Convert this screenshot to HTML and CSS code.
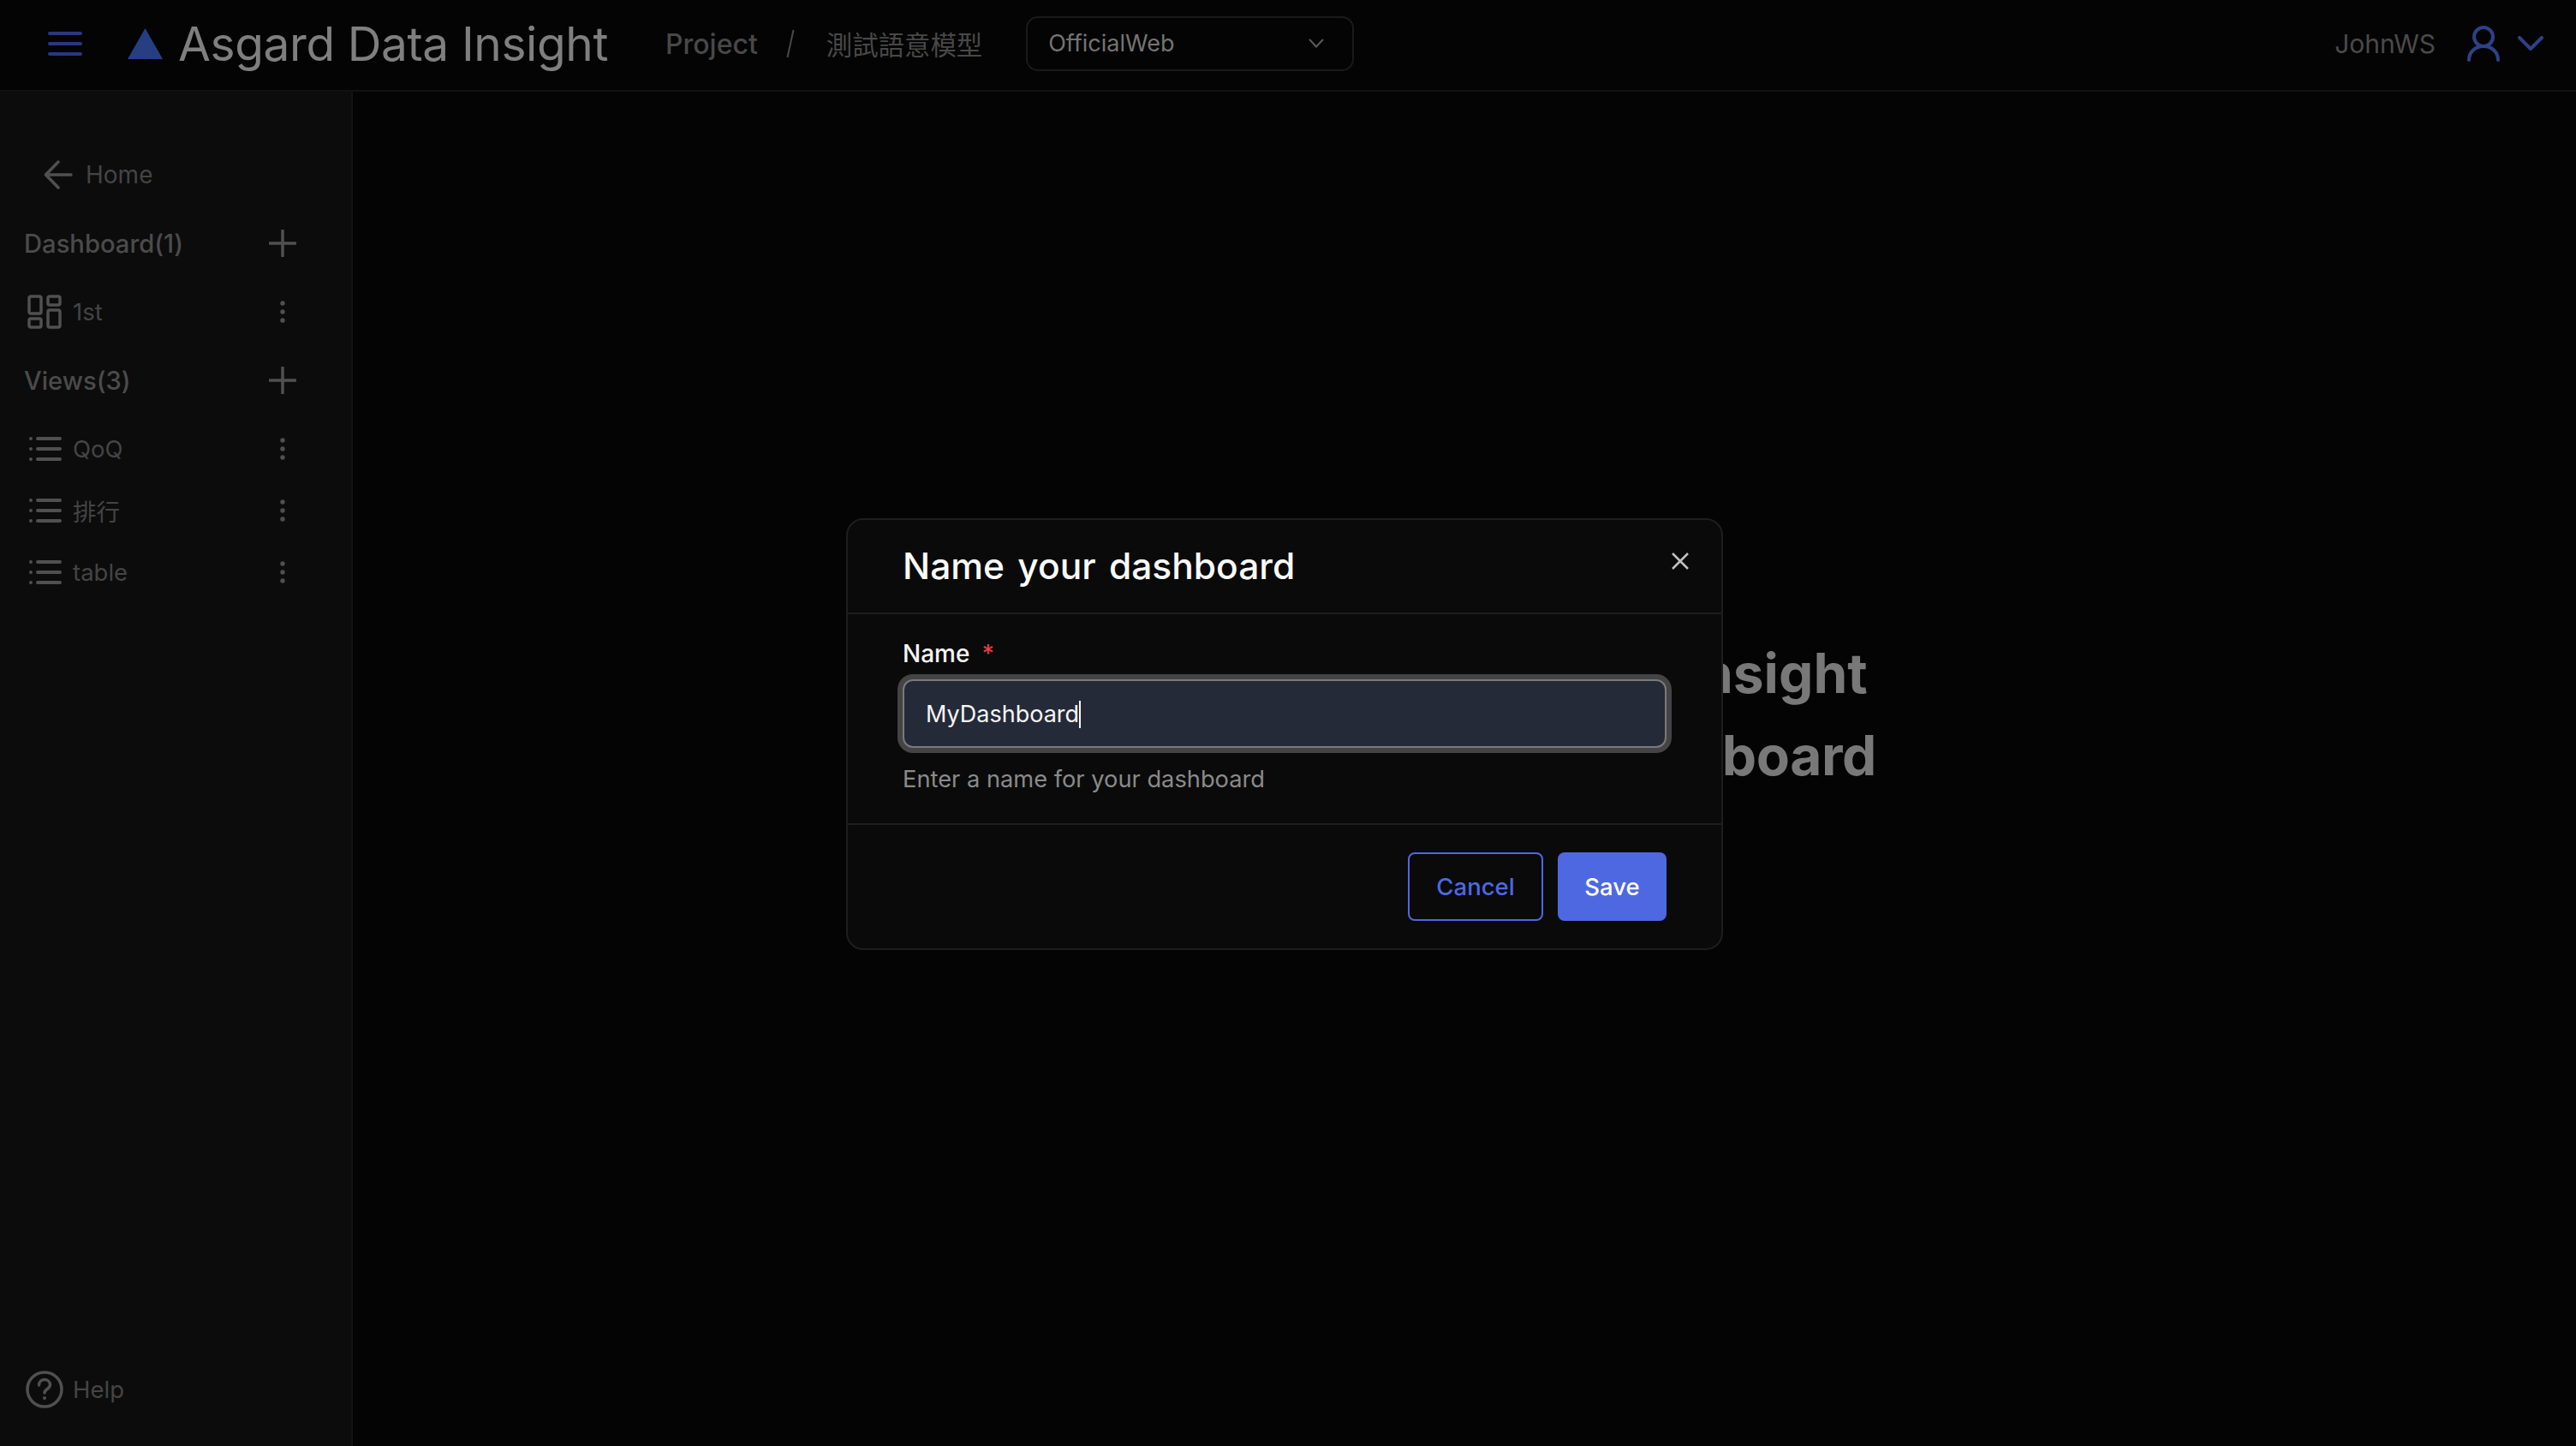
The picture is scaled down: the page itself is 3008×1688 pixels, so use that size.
FILE: index.html
```html
<!DOCTYPE html>
<html lang="en">
<head>
<meta charset="utf-8">
<title>Asgard Data Insight</title>
<link rel="stylesheet" href="styles.css">
</head>
<body>
<div class="app">
  <header class="topbar">
    <svg class="ico-menu" viewBox="0 0 40 28"><path d="M2 2h36M2 14h36M2 26h36"/></svg>
    <svg class="ico-logo" viewBox="0 0 41 36"><path d="M20.5 0L41 36H0z"/></svg>
    <div class="brand">Asgard Data Insight</div>
    <div class="crumb">Project</div>
    <svg class="crumb-sep" viewBox="0 0 10 34"><path d="M8.5 1L1.500 33"/></svg>
    <div class="crumb crumb-cjk">測試語意模型</div>
    <div class="select">
      <span>OfficialWeb</span>
      <svg class="select-chev" viewBox="0 0 18 11"><path d="M1 1l8 8.500L17 1"/></svg>
    </div>
    <div class="user">
      <span class="user-name">JohnWS</span>
      <svg class="ico-user" viewBox="0 0 38 42"><circle cx="19" cy="13" r="11"/><path d="M2 40c0-9.500 7.500-16 17-16s17 6.500 17 16"/></svg>
      <svg class="ico-chev" viewBox="0 0 30 18"><path d="M2 2l13 13L28 2"/></svg>
    </div>
  </header>
  <div class="body">
    <aside class="sidebar">
      <div class="home">
        <svg class="ico-arrow" viewBox="0 0 34 34"><path d="M32 17H3M17 2L2.500 17 17 32"/></svg>
        <span>Home</span>
      </div>
      <div class="sec"><span>Dashboard(1)</span><svg class="ico-plus" viewBox="0 0 32 32"><path d="M16 1v30M1 16h30"/></svg></div>
      <div class="item item-tall">
        <svg class="ico-item" viewBox="0 0 40 40"><rect x="2" y="2" width="14" height="20" rx="2"/><rect x="24" y="2" width="14" height="10" rx="2"/><rect x="2" y="28" width="14" height="10" rx="2"/><rect x="24" y="18" width="14" height="20" rx="2"/></svg>
        <span class="item-label">1st</span>
        <svg class="ico-dots" viewBox="0 0 6 26"><circle cx="3" cy="3" r="2.700"/><circle cx="3" cy="13" r="2.700"/><circle cx="3" cy="23" r="2.700"/></svg>
      </div>
      <div class="sec"><span>Views(3)</span><svg class="ico-plus" viewBox="0 0 32 32"><path d="M16 1v30M1 16h30"/></svg></div>
      <div class="views">
        <div class="item">
          <svg class="ico-item" viewBox="0 0 40 30"><path class="list-lines" d="M12 3h26M12 15h26M12 27h26"/><circle cx="4" cy="3" r="2"/><circle cx="4" cy="15" r="2"/><circle cx="4" cy="27" r="2"/></svg>
          <span class="item-label">QoQ</span>
          <svg class="ico-dots" viewBox="0 0 6 26"><circle cx="3" cy="3" r="2.700"/><circle cx="3" cy="13" r="2.700"/><circle cx="3" cy="23" r="2.700"/></svg>
        </div>
        <div class="item">
          <svg class="ico-item" viewBox="0 0 40 30"><path class="list-lines" d="M12 3h26M12 15h26M12 27h26"/><circle cx="4" cy="3" r="2"/><circle cx="4" cy="15" r="2"/><circle cx="4" cy="27" r="2"/></svg>
          <span class="item-label">排行</span>
          <svg class="ico-dots" viewBox="0 0 6 26"><circle cx="3" cy="3" r="2.700"/><circle cx="3" cy="13" r="2.700"/><circle cx="3" cy="23" r="2.700"/></svg>
        </div>
        <div class="item">
          <svg class="ico-item" viewBox="0 0 40 30"><path class="list-lines" d="M12 3h26M12 15h26M12 27h26"/><circle cx="4" cy="3" r="2"/><circle cx="4" cy="15" r="2"/><circle cx="4" cy="27" r="2"/></svg>
          <span class="item-label">table</span>
          <svg class="ico-dots" viewBox="0 0 6 26"><circle cx="3" cy="3" r="2.700"/><circle cx="3" cy="13" r="2.700"/><circle cx="3" cy="23" r="2.700"/></svg>
        </div>
      </div>
      <div class="help">
        <svg class="ico-help" viewBox="0 0 44 44"><circle cx="22" cy="22" r="20"/><path d="M15.500 17c0-4 3-6.500 6.500-6.500s6.500 2.500 6.500 6c0 5-6.500 5-6.500 9.500"/><circle class="help-dot" cx="22" cy="32" r="2"/></svg>
        <span>Help</span>
      </div>
    </aside>
    <main class="main">
      <div class="empty">Welcome, Asgard Data Insight</div>
      <div class="empty empty-tight">Start by designing a dashboard</div>
    </main>
  </div>
</div>
<div class="modal" role="dialog">
  <div class="modal-head">
    <h2 class="modal-title">Name your dashboard</h2>
    <svg class="ico-close" viewBox="0 0 20 20"><path d="M1 1l18 18M19 1L1 19"/></svg>
  </div>
  <div class="modal-body">
    <div class="label">Name<span class="req">*</span></div>
    <div class="input"><span class="input-text">MyDashboard</span></div>
    <div class="hint">Enter a name for your dashboard</div>
  </div>
  <div class="modal-foot">
    <button class="btn btn-outline">Cancel</button>
    <button class="btn btn-solid">Save</button>
  </div>
</div>
</body>
</html>
```
FILE: styles.css
```css
* { box-sizing: border-box; }
html, body { margin: 0; height: 100%; }
body {
  background: #040404;
  font-family: Inter, "Noto Sans CJK TC", sans-serif;
  overflow: hidden;
}
svg { display: block; flex: none; fill: none; }
.app { display: flex; flex-direction: column; height: 100vh; }

.topbar {
  display: flex;
  align-items: center;
  height: 107px;
  padding: 0 38px 3px 56px;
  background: #040404;
  border-bottom: 2px solid #111;
  flex: none;
}
.ico-menu { width: 40px; height: 28px; stroke: #29397c; stroke-width: 4; stroke-linecap: round; }
.ico-logo { width: 41px; height: 36px; margin-left: 53px; fill: #263f82; }
.brand { margin-left: 18px; font-size: 55px; color: #7f7f7f; white-space: nowrap; letter-spacing: -0.4px; }
.crumb { font-size: 32px; font-weight: 500; color: #484848; margin-left: 67px; white-space: nowrap; }
.crumb-sep { width: 10px; height: 34px; margin-left: 33px; stroke: #484848; stroke-width: 2; }
.crumb-cjk { margin-left: 37px; margin-bottom: 1px; font-size: 30.400px; font-weight: 400; }
.select {
  display: flex;
  align-items: center;
  justify-content: space-between;
  width: 383px;
  height: 64px;
  margin-left: 51px;
  margin-bottom: 1px;
  padding: 0 33px 0 24px;
  border: 2px solid #1a1a1a;
  border-radius: 14px;
  font-size: 27px;
  color: #737373;
}
.select-chev { width: 18px; height: 11px; stroke: #5a5a5a; stroke-width: 2; }
.user { display: flex; align-items: center; margin-left: auto; }
.user-name { font-size: 30px; color: #4a4a4a; }
.ico-user { width: 38px; height: 42px; margin-left: 37px; stroke: #2c4187; stroke-width: 4; stroke-linecap: round; }
.ico-chev { width: 30px; height: 18px; margin-left: 21px; stroke: #2c4187; stroke-width: 4; stroke-linecap: round; stroke-linejoin: round; }

.body { display: flex; flex: 1; min-height: 0; }
.sidebar {
  display: flex;
  flex-direction: column;
  width: 412px;
  flex: none;
  padding: 57px 0 44px 0;
  background: #0c0c0c;
  border-right: 2px solid #141414;
  color: #444;
}
.home { display: flex; align-items: center; height: 80px; padding-left: 51px; font-size: 28px; }
.home span { margin-left: 15px; }
.ico-arrow { width: 34px; height: 34px; stroke: #505050; stroke-width: 3.500; stroke-linecap: round; stroke-linejoin: round; }
.sec {
  display: flex;
  align-items: center;
  justify-content: space-between;
  height: 80px;
  padding: 0 64px 0 28px;
  font-size: 29.200px;
  font-weight: 500;
  color: #4b4b4b;
}
.ico-plus { width: 32px; height: 32px; stroke: #505050; stroke-width: 3.500; stroke-linecap: round; }
.item { display: flex; align-items: center; height: 72px; padding: 0 77px 0 32px; font-size: 27.500px; }
.item-tall { height: 80px; }
.item-label { margin-left: 13px; flex: 1; }
.ico-item { width: 40px; height: 40px; stroke: #505050; stroke-width: 3.500; }
.views .ico-item { height: 30px; }
.ico-item circle { fill: #505050; stroke: none; }
.list-lines { stroke-width: 4; stroke-linecap: round; }
.ico-dots { width: 6px; height: 26px; fill: #505050; }
.views { margin-top: 4px; }
.help { display: flex; align-items: center; margin-top: auto; padding-left: 30px; font-size: 27.500px; }
.help span { margin-left: 11px; }
.ico-help { width: 44px; height: 44px; stroke: #505050; stroke-width: 3.500; stroke-linecap: round; }
.help-dot { fill: #505050; stroke: none; }

.main {
  flex: 1;
  display: flex;
  flex-direction: column;
  align-items: center;
  justify-content: center;
  padding-bottom: 127px;
}
.empty { font-size: 64px; font-weight: 700; line-height: 96px; color: #787878; white-space: nowrap; }
.empty-tight { letter-spacing: -0.4px; }

.modal {
  position: fixed;
  top: 605px;
  left: 988px;
  width: 1024px;
  height: 504px;
  display: flex;
  flex-direction: column;
  background: #0a0a0a;
  border: 2px solid #1e1e1e;
  border-radius: 20px;
}
.modal-head {
  position: relative;
  height: 110px;
  padding: 26px 64px 0;
  border-bottom: 2px solid #1e1e1e;
  flex: none;
}
.modal-title { margin: 0; font-size: 42.500px; font-weight: 500; line-height: 56px; color: #fbfbfb; word-spacing: 4px; }
.ico-close { position: absolute; top: 38px; right: 38px; width: 20px; height: 20px; stroke: #c0c0c0; stroke-width: 2.500; }
.modal-body { flex: 1; padding: 28px 64px 0; }
.label { font-size: 28px; font-weight: 500; line-height: 36px; color: #f5f5f5; }
.req { margin-left: 14px; color: #e53e3e; }
.input {
  display: flex;
  align-items: center;
  height: 80px;
  margin-top: 12px;
  padding: 2px 0 0 25px;
  background: #252a38;
  border: 2px solid #7a7a7a;
  border-radius: 12px;
  box-shadow: 0 0 0 6px #444;
  font-size: 27px;
  color: #f5f5f5;
}
.input-text { display: block; height: 32px; line-height: 32px; border-right: 2px solid #f5f5f5; }
.hint { margin-top: 19px; font-size: 27.250px; line-height: 36px; color: #8a8a8a; }
.modal-foot {
  display: flex;
  justify-content: flex-end;
  gap: 17px;
  height: 146px;
  padding: 32px 64px 0;
  border-top: 2px solid #1e1e1e;
  flex: none;
}
.btn { height: 80px; font-family: inherit; font-size: 27.500px; font-weight: 500; border-radius: 8px; padding: 0; }
.btn-outline { width: 158px; background: transparent; border: 2px solid #4e68e2; color: #4e68e2; }
.btn-solid { width: 127px; background: #4e68e2; border: 0; color: #fff; }
```
